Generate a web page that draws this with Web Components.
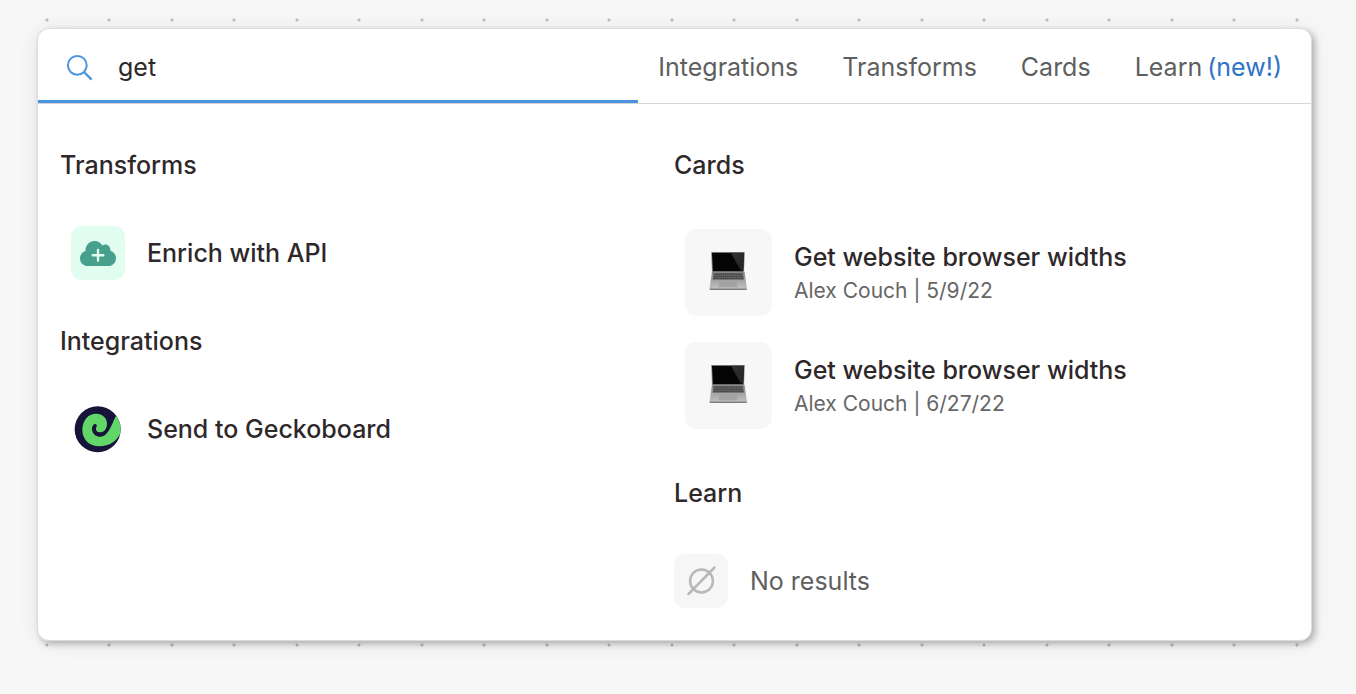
<!DOCTYPE html>
<html lang="en">
<head>
<meta charset="utf-8">
<meta name="viewport" content="width=device-width, initial-scale=1">
<title>Search</title>
<style>
  body {
    margin: 0;
    min-height: 100vh;
    box-sizing: border-box;
    padding: 28px 44px 53px 37px;
    font-family: Inter, "Liberation Sans", sans-serif;
    font-size: 25px;
    line-height: 32px;
    color: #2f282a;
    background-color: #f7f7f7;
    background-image:
      radial-gradient(circle at 47px 20px, #bdbdbd 1px, transparent 2px),
      radial-gradient(circle at 109px 20px, #bdbdbd 1px, transparent 2px);
    background-size: 125px 125px;
  }
  filter-nav span { color: #2f73c6; }
</style>
</head>
<body>
<search-panel>
  <search-field slot="field" value="get"></search-field>
  <filter-nav slot="nav">
    <a href="#integrations">Integrations</a>
    <a href="#transforms">Transforms</a>
    <a href="#cards">Cards</a>
    <a href="#learn">Learn <span>(new!)</span></a>
  </filter-nav>
  <result-group slot="left" heading="Transforms">
    <result-row href="#enrich"><ui-icon slot="icon" name="cloud"></ui-icon>Enrich with API</result-row>
  </result-group>
  <result-group slot="left" heading="Integrations">
    <result-row href="#geckoboard"><ui-icon slot="icon" name="gecko"></ui-icon>Send to Geckoboard</result-row>
  </result-group>
  <result-group slot="right" heading="Cards" class="cards">
    <card-row href="#card-1"><ui-icon slot="icon" name="laptop"></ui-icon>Get website browser widths<span slot="meta">Alex Couch | 5/9/22</span></card-row>
    <card-row href="#card-2"><ui-icon slot="icon" name="laptop"></ui-icon>Get website browser widths<span slot="meta">Alex Couch | 6/27/22</span></card-row>
  </result-group>
  <result-group slot="right" heading="Learn">
    <result-row empty><ui-icon slot="icon" name="none"></ui-icon>No results</result-row>
  </result-group>
</search-panel>

<script>
const ICONS = {
  search: `<svg width="32" height="32" viewBox="0 0 32 32" fill="none" stroke="#4a94e0" stroke-width="2"><circle cx="13.3" cy="14.3" r="9.4"/><path d="M20 21l7.600 7.600" stroke-width="2.400"/></svg>`,
  cloud: `<svg width="54" height="54" viewBox="0 0 54 54"><rect width="54" height="54" rx="11" fill="#e0fdef"/><path d="M17 40C12.500 40 9 36.700 9 32.400C9 28.900 11.300 26 14.500 25.100C14.200 19.300 18.500 15 23.400 15C27 15 29.900 16.800 31.400 19.500C35.300 16.900 40 20 39.300 24.800C42.700 25.700 45 28.600 45 32.200C45 36.600 41.600 40 37.200 40Z" fill="#47a08c"/><path d="M27 24v10.600M21.700 29.300h10.600" stroke="#e0fdef" stroke-width="2.400" stroke-linecap="round"/></svg>`,
  gecko: `<svg width="54" height="54" viewBox="33 21 162 162"><defs><clipPath id="disc"><circle cx="113" cy="103" r="69"/></clipPath></defs><circle cx="113" cy="103" r="69" fill="#17143a"/><path clip-path="url(#disc)" d="M168 62L188 88C184 130 155 154 118 154C88 154 67 133 67 105C67 76 85 56 108 56C128 56 141 69 141 86C141 101 132 112 120 112C111 112 105 105 109 97C112 91 109 86 104 87C98 90 95 98 96 104C98 117 108 125 121 125C143 125 153 93 168 62Z" fill="#63d669"/></svg>`,
  none: `<svg width="54" height="54" viewBox="0 0 54 54"><rect width="54" height="54" rx="11" fill="#f6f6f6"/><g fill="none" stroke="#b8b8b8" stroke-width="2.500" stroke-linecap="round"><circle cx="27.500" cy="27" r="11.400"/><path d="M14.500 40L40.500 13.500"/></g></svg>`,
  laptop: `<svg width="87" height="87" viewBox="0 0 87 87"><defs>
    <linearGradient id="deck" x1="0" y1="0" x2="0" y2="1"><stop offset="0" stop-color="#858585"/><stop offset="1" stop-color="#c0c0c0"/></linearGradient>
    <linearGradient id="glare" x1="0" y1="0" x2="1" y2="1"><stop offset="0" stop-color="#333"/><stop offset="1" stop-color="#222"/></linearGradient></defs>
    <rect width="87" height="87" rx="11" fill="#f7f7f7"/>
    <path d="M26 23h34l-1 20H27Z" fill="#9b9b9b"/><path d="M27 23.800h32l-.8 18.700H27.800Z" fill="#050505"/>
    <path d="M46 23.800h13l-.7 17.700h-2.500Z" fill="url(#glare)"/>
    <path d="M27 42.500h32.500l2.500 17.300H24.500Z" fill="url(#deck)"/>
    <path d="M28.500 44h29.500l1 6.600H27.700Z" fill="#666"/>
    <g fill="none" stroke="#454545" stroke-width="1.300" stroke-dasharray="1.700 .5"><path d="M29 45.100h28.500M28.800 47.300h29.200M28.500 49.500h29.800"/></g>
    <path d="M34.500 51.900h17l.6 6.300H33.900Z" fill="#a2a2a2"/>
    <path d="M24.500 59.500h37.500l-.4 1.400H24.900Z" fill="#7c7c7c"/></svg>`
};

function define(name, render) {
  customElements.define(name, class extends HTMLElement {
    constructor() {
      super();
      this.attachShadow({ mode: "open" });
    }
    connectedCallback() {
      this.shadowRoot.innerHTML = render(this);
    }
  });
}

define("ui-icon", el => `
  <style>:host { display: block; flex: none; } svg { display: block; }</style>
  ${ICONS[el.getAttribute("name")].replace("<svg", '<svg aria-hidden="true"')}`);

define("search-panel", () => `
  <style>
    :host {
      display: block; background: #fff; border: 1px solid #dcdcdc; border-radius: 12px;
      box-shadow: 3px 3px 6px rgba(40, 30, 34, .3), 0 2px 24px rgba(0, 0, 0, .07);
    }
    header { display: flex; height: 74px; border-bottom: 1px solid #d6d6d6; }
    slot[name=field] { display: flex; flex: 600 1 0; min-width: 0; }
    slot[name=nav] { display: flex; flex: 673 1 0; justify-content: flex-end; }
    main { display: grid; grid-template-columns: 1fr 1fr; padding: 45px 23px 32px 22px; }
    section { display: flex; flex-direction: column; gap: 45px; }
  </style>
  <header><slot name="field"></slot><slot name="nav"></slot></header>
  <main>
    <section><slot name="left"></slot></section>
    <section><slot name="right"></slot></section>
  </main>`);

define("search-field", el => `
  <style>
    :host { display: flex; flex: 1; min-width: 0; border-bottom: 3px solid #4a94e0; }
    label { display: flex; flex: 1; align-items: center; gap: 22px; padding: 4px 26px 0; min-width: 0; }
    input {
      flex: 1; min-width: 0; height: 40px; padding: 0; border: 0; outline: 0;
      background: none; font: inherit; color: inherit;
    }
  </style>
  <label><ui-icon name="search"></ui-icon><input type="text" aria-label="Search" value="${el.getAttribute("value")}"></label>`);

define("filter-nav", () => `
  <style>
    :host { display: block; }
    nav { display: flex; align-items: center; gap: 44px; height: 100%; padding: 1px 29px 0 0; box-sizing: border-box; white-space: nowrap; }
    ::slotted(a) { display: flex; gap: 5px; color: #5f5f5f; text-decoration: none; }
  </style>
  <nav aria-label="Result types"><slot></slot></nav>`);

define("result-group", el => `
  <style>
    :host { display: block; }
    h2 { margin: 0 0 45px; font: inherit; font-weight: 500; }
    div { display: flex; flex-direction: column; gap: 26px; }
    :host(.cards) div { padding: 3px 0; }
  </style>
  <h2>${el.getAttribute("heading")}</h2><div><slot></slot></div>`);

define("result-row", el => {
  const empty = el.hasAttribute("empty");
  const tag = empty ? "p" : "a";
  return `
  <style>
    :host { display: block; font-weight: 500; padding-left: 11px; }
    :host([empty]) { font-weight: 400; padding-left: 0; color: #5f5f5f; }
    a, p { display: flex; align-items: center; gap: 22px; margin: 0; color: inherit; text-decoration: none; }
  </style>
  <${tag}${empty ? "" : ` href="${el.getAttribute("href")}"`}><slot name="icon"></slot><span><slot></slot></span></${tag}>`;
});

define("card-row", el => `
  <style>
    :host { display: block; padding-left: 11px; }
    a { display: flex; align-items: center; gap: 22px; color: inherit; text-decoration: none; }
    a > span { padding-top: 2px; }
    strong, small { display: block; line-height: 33px; }
    strong { font-weight: 500; }
    small { font-size: 21px; color: #666; }
  </style>
  <a href="${el.getAttribute("href")}"><slot name="icon"></slot>
    <span><strong><slot></slot></strong><small><slot name="meta"></slot></small></span></a>`);
</script>
</body>
</html>
